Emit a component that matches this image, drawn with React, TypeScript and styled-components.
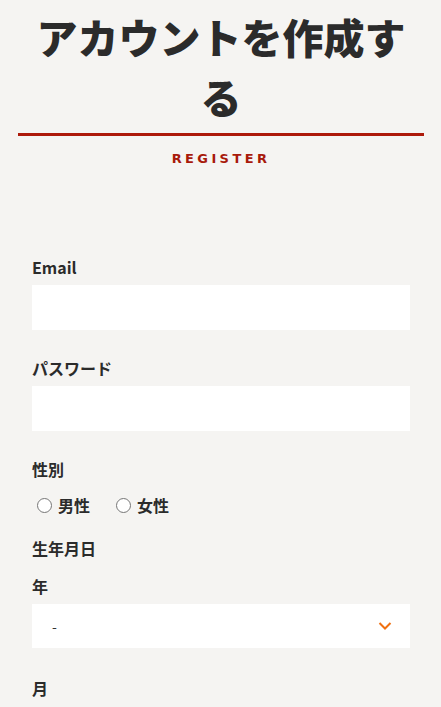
import React from "react";
import styled, { createGlobalStyle } from "styled-components";

const GlobalStyle = createGlobalStyle`
  html, body {
    margin: 0;
    padding: 0;
    background: #f5f4f2;
  }
  body {
    font-family: "Noto Sans CJK JP", "Noto Sans", sans-serif;
    color: #2b2b2b;
  }
`;

const Page = styled.div`
  background: #f5f4f2;
  min-height: 707px;
  overflow: hidden;
`;

const Header = styled.header`
  margin: 0 17px 0 18px;
  padding-top: 6px;
  text-align: center;
`;

const Title = styled.h1`
  margin: 0;
  padding: 0 12px;
  font-size: 41px;
  line-height: 60px;
  font-weight: 900;
  color: #2b2b2b;
`;

const Rule = styled.hr`
  margin: 7px 0 0;
  border: none;
  height: 3px;
  background: #ad1a0b;
`;

const SubTitle = styled.p`
  margin: 14px 0 0;
  font-family: "DejaVu Sans", "Liberation Sans", sans-serif;
  font-weight: 700;
  font-size: 13px;
  line-height: 18px;
  letter-spacing: 3.4px;
  color: #a81a0b;
`;

const Form = styled.form`
  display: flex;
  flex-direction: column;
  padding: 87px 31px 0 32px;
`;

const Label = styled.label<{ $gap?: number }>`
  display: block;
  font-size: 16px;
  font-weight: 700;
  line-height: 24px;
  margin-top: ${(p) => p.$gap ?? 0}px;
  margin-bottom: 6px;
`;

const TextInput = styled.input`
  box-sizing: border-box;
  display: block;
  width: 100%;
  height: 45px;
  border: none;
  background: #ffffff;
  padding: 0 20px;
  font-size: 15px;
  outline: none;
`;

const RadioRow = styled.div`
  display: flex;
  align-items: center;
  gap: 26px;
  padding-left: 5px;
  margin-top: 2px;
  height: 32px;
`;

const RadioOption = styled.label`
  display: flex;
  align-items: center;
  gap: 6px;
  font-size: 16px;
  font-weight: 700;
  line-height: 24px;
`;

const Radio = styled.input`
  appearance: none;
  margin: 0;
  width: 15px;
  height: 15px;
  border: 1px solid #767676;
  border-radius: 50%;
  background: #fff;
  box-sizing: border-box;
`;

const SelectWrap = styled.div`
  position: relative;
  height: 44px;
  background: #ffffff;
`;

const Select = styled.select`
  appearance: none;
  width: 100%;
  height: 100%;
  border: none;
  background: transparent;
  padding: 0 20px;
  font-family: "Noto Sans CJK JP", sans-serif;
  font-size: 14px;
  color: #333;
  outline: none;
`;

const Chevron = styled.svg`
  position: absolute;
  right: 18px;
  top: 50%;
  transform: translateY(-50%);
  pointer-events: none;
`;

export default function App() {
  return (
    <Page>
      <GlobalStyle />
      <Header>
        <Title>アカウントを作成する</Title>
        <Rule />
        <SubTitle>REGISTER</SubTitle>
      </Header>
      <Form>
        <Label htmlFor="email">Email</Label>
        <TextInput id="email" type="email" />

        <Label htmlFor="password" $gap={26}>
          パスワード
        </Label>
        <TextInput id="password" type="password" />

        <Label $gap={26}>性別</Label>
        <RadioRow>
          <RadioOption>
            <Radio type="radio" name="gender" value="male" />
            男性
          </RadioOption>
          <RadioOption>
            <Radio type="radio" name="gender" value="female" />
            女性
          </RadioOption>
        </RadioRow>

        <Label $gap={15}>生年月日</Label>
        <Label htmlFor="year" $gap={8}>
          年
        </Label>
        <SelectWrap>
          <Select id="year" defaultValue="">
            <option value="">-</option>
          </Select>
          <Chevron width="14" height="9" viewBox="0 0 14 9">
            <path d="M1.5 1.5 L7 7 L12.5 1.5" fill="none" stroke="#f07010" strokeWidth="2" />
          </Chevron>
        </SelectWrap>

        <Label htmlFor="month" $gap={28}>
          月
        </Label>
      </Form>
    </Page>
  );
}
